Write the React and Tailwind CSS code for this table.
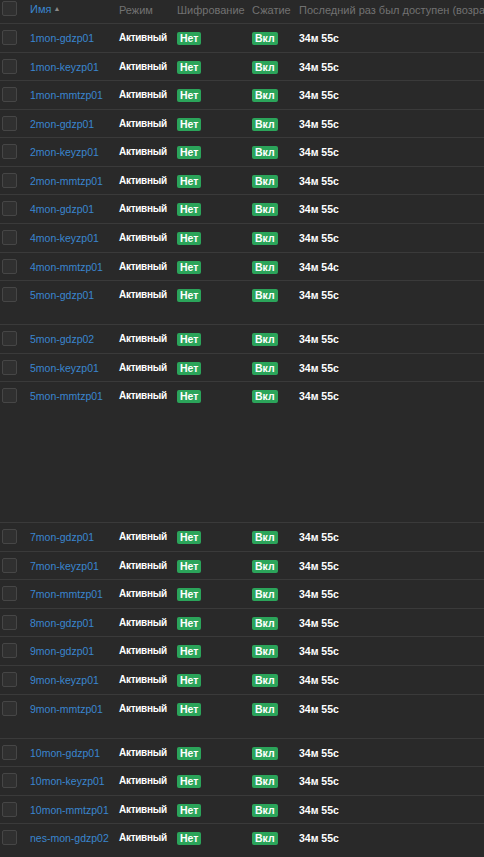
import React from "react";

const rows = [
  ["1mon-gdzp01", "34м 55с"],
  ["1mon-keyzp01", "34м 55с"],
  ["1mon-mmtzp01", "34м 55с"],
  ["2mon-gdzp01", "34м 55с"],
  ["2mon-keyzp01", "34м 55с"],
  ["2mon-mmtzp01", "34м 55с"],
  ["4mon-gdzp01", "34м 55с"],
  ["4mon-keyzp01", "34м 55с"],
  ["4mon-mmtzp01", "34м 54с"],
  ["5mon-gdzp01", "34м 55с", "h-[44px]"],
  ["5mon-gdzp02", "34м 55с"],
  ["5mon-keyzp01", "34м 55с"],
  ["5mon-mmtzp01", "34м 55с", "h-[141px]"],
  ["7mon-gdzp01", "34м 55с"],
  ["7mon-keyzp01", "34м 55с"],
  ["7mon-mmtzp01", "34м 55с"],
  ["8mon-gdzp01", "34м 55с"],
  ["9mon-gdzp01", "34м 55с"],
  ["9mon-keyzp01", "34м 55с"],
  ["9mon-mmtzp01", "34м 55с", "h-[44px]"],
  ["10mon-gdzp01", "34м 55с"],
  ["10mon-keyzp01", "34м 55с"],
  ["10mon-mmtzp01", "34м 55с"],
  ["nes-mon-gdzp02", "34м 55с"],
];

function Box() {
  return <div className="w-[15px] h-[15px] rounded-[2px] bg-[#303030] border border-[#464646]" />;
}

function Badge({ children }) {
  return (
    <span className="block bg-[#2ba45a] text-white font-bold text-[10.5px] leading-[13px] px-[3px] rounded-[2px]">
      {children}
    </span>
  );
}

const grid = "grid grid-cols-[30px_89px_58px_75px_47px_1fr] items-start";

export default function App() {
  return (
    <div
      className="w-[484px] h-[857px] overflow-hidden bg-[#292929] whitespace-nowrap"
      style={{ fontFamily: '"Liberation Sans", Arial, sans-serif' }}
    >
      <div className={`${grid} h-[24px] border-b border-[#3a3a3a] pt-[1px] text-[11px] leading-[16px] text-[#727272]`}>
        <div className="pl-[2px]"><Box /></div>
        <div className="text-[#3a86cf] flex items-center">
          Имя<span className="ml-[2px] text-[7px] text-[#8a8a8a]">▲</span>
        </div>
        <div className="pt-[1px]">Режим</div>
        <div className="pt-[1px]">Шифрование</div>
        <div className="pt-[1px]">Сжатие</div>
        <div className="pt-[1px] overflow-hidden">Последний раз был доступен (возраст)</div>
      </div>
      {rows.map(([name, time, h], i) => (
        <div
          key={i}
          className={`${grid} ${h || "h-[28.57px]"} ${i < rows.length - 1 ? "border-b border-[#3a3a3a]" : ""} pt-[6px] leading-[16px]`}
        >
          <div className="pl-[2px]"><Box /></div>
          <div className="text-[#3a86cf] text-[10.5px]">{name}</div>
          <div className="text-white font-bold text-[10px] tracking-[-0.3px]">Активный</div>
          <div className="pt-[2px] flex"><Badge>Нет</Badge></div>
          <div className="pt-[2px] flex"><Badge>Вкл</Badge></div>
          <div className="text-white font-bold text-[10.5px]">{time}</div>
        </div>
      ))}
    </div>
  );
}
